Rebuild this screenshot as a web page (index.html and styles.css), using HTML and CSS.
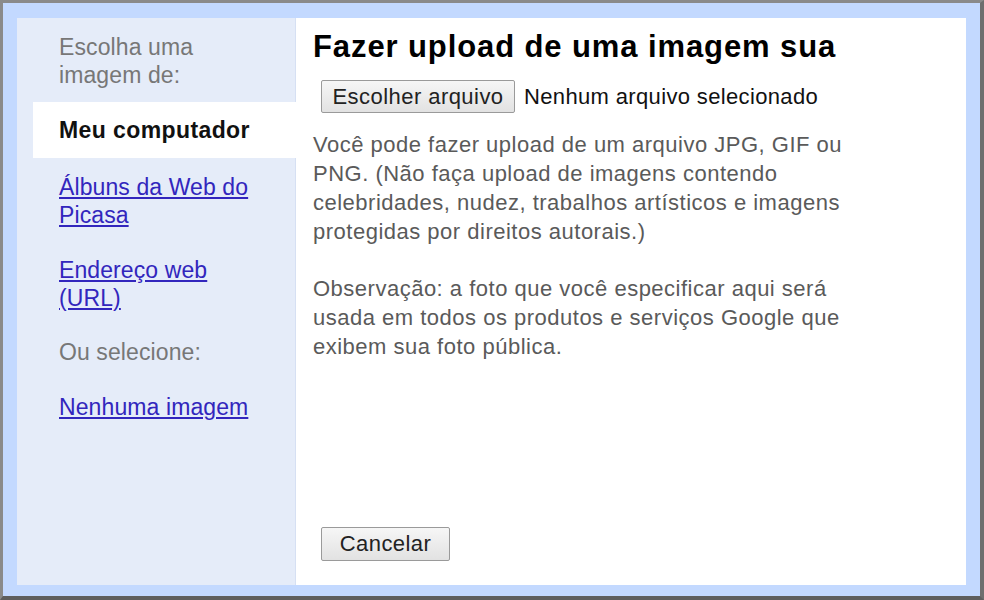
FILE: index.html
```html
<!DOCTYPE html>
<html lang="pt-BR">
<head>
<meta charset="utf-8">
<title>Fazer upload de uma imagem sua</title>
<link rel="stylesheet" href="styles.css">
</head>
<body>
<div class="dialog">
  <div class="inner">
    <aside class="sidebar">
      <div class="side-heading">Escolha uma<br>imagem de:</div>
      <div class="side-item selected">Meu computador</div>
      <a class="side-link first" href="#">Álbuns da Web do<br>Picasa</a>
      <a class="side-link" href="#">Endereço web<br>(URL)</a>
      <div class="side-label">Ou selecione:</div>
      <a class="side-link" href="#">Nenhuma imagem</a>
    </aside>
    <main class="main">
      <h1 class="title">Fazer upload de uma imagem sua</h1>
      <div class="file-row">
        <span class="btn btn-file">Escolher arquivo</span>
        <span class="file-status">Nenhum arquivo selecionado</span>
      </div>
      <p class="desc">Você pode fazer upload de um arquivo JPG, GIF ou<br>PNG. (Não faça upload de imagens contendo<br>celebridades, nudez, trabalhos artísticos e imagens<br>protegidas por direitos autorais.)</p>
      <p class="desc">Observação: a foto que você especificar aqui será<br>usada em todos os produtos e serviços Google que<br>exibem sua foto pública.</p>
      <div class="actions">
        <span class="btn btn-cancel">Cancelar</span>
      </div>
    </main>
  </div>
</div>
</body>
</html>
```

FILE: styles.css
```css
html, body {
  margin: 0;
  padding: 0;
  background: #7a7a7a;
}

body {
  font-family: "Liberation Sans", Arial, sans-serif;
  width: 984px;
  height: 600px;
  overflow: hidden;
}

.dialog {
  box-sizing: border-box;
  width: 984px;
  height: 600px;
  border-top: 3px solid #8a8a8a;
  border-left: 3px solid #8a8a8a;
  border-right: 4px solid #6e6e6e;
  border-bottom: 4px solid #5e5e5e;
  background: #c3d9ff;
  padding: 15px 14px 11px 14px;
}

.inner {
  display: flex;
  height: 100%;
  background: #ffffff;
}

.sidebar {
  width: 279px;
  flex: none;
  box-sizing: border-box;
  background: #e5ecf9;
  border-right: 1px solid #d6e0f3;
  padding-top: 15px;
  display: flex;
  flex-direction: column;
  font-size: 23px;
  line-height: 28px;
  letter-spacing: 0.1px;
}

.side-heading {
  color: #777777;
  padding-left: 42px;
}

.side-item.selected {
  margin-top: 13px;
  margin-left: 16px;
  margin-right: -1px;
  height: 56px;
  display: flex;
  align-items: center;
  padding-left: 26px;
  background: #ffffff;
  color: #111111;
  font-weight: bold;
  letter-spacing: 0.4px;
}

.side-link {
  color: #3226bd;
  text-decoration: underline;
  padding-left: 42px;
  margin-top: 27px;
}

.side-link.first {
  margin-top: 15px;
}

.side-label {
  color: #777777;
  padding-left: 42px;
  margin-top: 26px;
}

.main {
  flex: 1;
  display: flex;
  flex-direction: column;
  padding: 13px 0 24px 17px;
}

.title {
  margin: 0;
  font-size: 31px;
  line-height: 32px;
  font-weight: bold;
  letter-spacing: 0.9px;
  color: #000000;
}

.file-row {
  display: flex;
  align-items: center;
  gap: 9px;
  margin-top: 17px;
  margin-left: 8px;
  font-size: 22px;
}

.btn {
  box-sizing: border-box;
  display: inline-flex;
  align-items: center;
  justify-content: center;
  border: 1px solid #9a9a9a;
  border-radius: 2px;
  background: linear-gradient(#f6f6f6, #e2e2e2);
  color: #222222;
  font-size: 22px;
  letter-spacing: 0.45px;
}

.btn-file {
  width: 194px;
  height: 33px;
}

.file-status {
  color: #111111;
  letter-spacing: 0.35px;
}

.desc {
  margin: 17px 0 0 0;
  font-size: 22px;
  line-height: 29px;
  letter-spacing: 0.5px;
  color: #5a5a5a;
}

.desc + .desc {
  margin-top: 28px;
}

.actions {
  margin-top: auto;
  margin-left: 8px;
}

.btn-cancel {
  width: 129px;
  height: 34px;
}
```
